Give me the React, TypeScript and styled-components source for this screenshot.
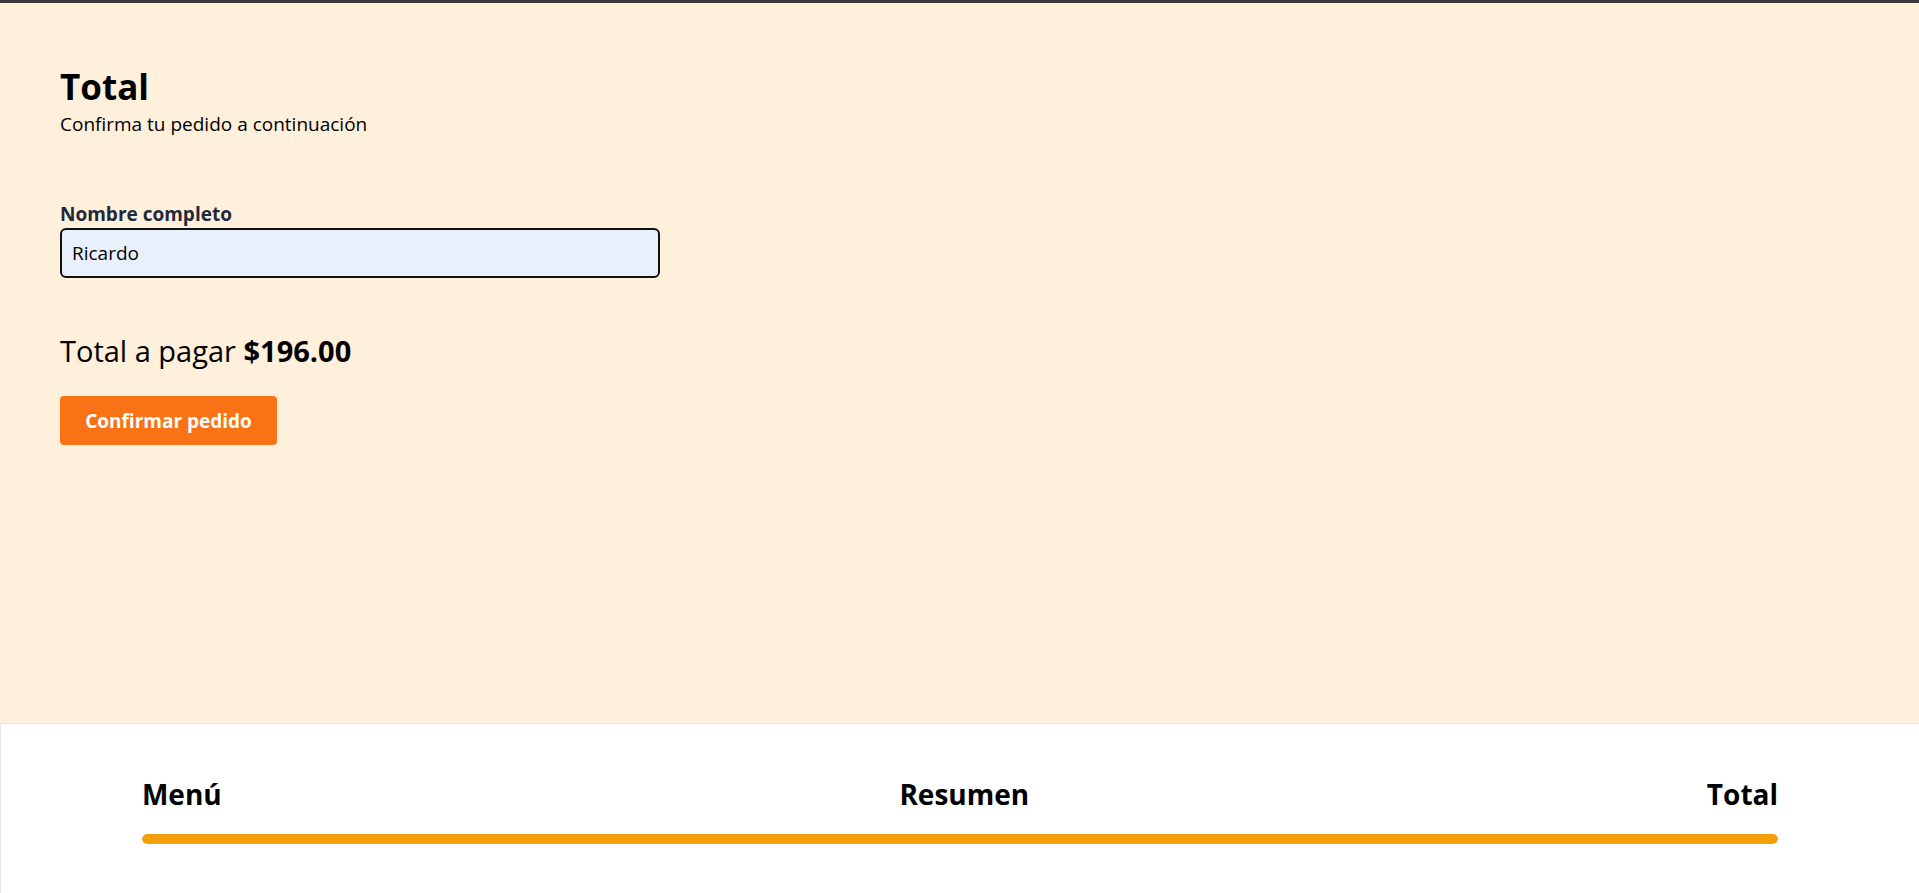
import React from "react";
import styled, { createGlobalStyle } from "styled-components";

const GlobalStyle = createGlobalStyle`
  * { box-sizing: border-box; }
  html, body {
    margin: 0;
    padding: 0;
    background: #fef0da;
    font-family: "Open Sans", "Noto Sans", Arial, sans-serif;
    color: #000;
  }
`;

const Page = styled.div`
  display: flex;
  flex-direction: column;
  min-height: 100vh;
`;

const TopBar = styled.div`
  height: 3px;
  background: #3b3b3b;
`;

const Main = styled.main`
  height: 720px;
  padding: 60px 60px 0;
  background: #fef0da;
`;

const Heading = styled.h1`
  margin: 0;
  font-size: 35px;
  line-height: 48px;
  font-weight: 700;
`;

const Subtitle = styled.p`
  margin: 1px 0 0;
  font-size: 19px;
  line-height: 24px;
`;

const Form = styled.form`
  display: flex;
  flex-direction: column;
  align-items: flex-start;
  margin-top: 66px;
`;

const Field = styled.div`
  display: flex;
  flex-direction: column;
  gap: 2px;
  width: 600px;
`;

const Label = styled.label`
  font-size: 19px;
  line-height: 24px;
  font-weight: 700;
  color: #1e293b;
`;

const Input = styled.input`
  width: 600px;
  height: 50px;
  padding: 0 10px;
  border: 2px solid #111;
  border-radius: 6px;
  background: #e8f0fe;
  font-family: inherit;
  font-size: 19px;
  color: #000;
  outline: none;
`;

const TotalLine = styled.p`
  margin: 55px 0 0;
  font-size: 29px;
  line-height: 36px;
  font-weight: 400;
`;

const Amount = styled.strong`
  font-weight: 700;
`;

const Button = styled.button`
  margin-top: 27px;
  width: 217px;
  height: 49px;
  display: flex;
  align-items: center;
  justify-content: center;
  border: none;
  border-radius: 4px;
  background: #f97316;
  color: #fff;
  font-family: inherit;
  font-size: 19px;
  font-weight: 700;
  cursor: pointer;
`;

const Footer = styled.footer`
  flex: 1;
  background: #fff;
  border-top: 1px solid #e5e7eb;
  border-left: 1px solid #e5e7eb;
  padding-top: 52px;
`;

const Steps = styled.div`
  width: 85.3%;
  margin: 0 auto;
`;

const StepLabels = styled.div`
  display: flex;
  justify-content: space-between;
`;

const StepLabel = styled.span`
  font-size: 28px;
  line-height: 36px;
  font-weight: 700;
`;

const Progress = styled.div`
  margin-top: 22px;
  height: 10px;
  border-radius: 999px;
  background: #f3f4f6;
  overflow: hidden;
`;

const ProgressFill = styled.div`
  height: 100%;
  border-radius: 999px;
  background: #f59e0b;
`;

export default function App() {
  const steps = ["Menú", "Resumen", "Total"];
  const progress = 100;
  return (
    <Page>
      <GlobalStyle />
      <TopBar />
      <Main>
        <Heading>Total</Heading>
        <Subtitle>Confirma tu pedido a continuación</Subtitle>
        <Form onSubmit={(e) => e.preventDefault()}>
          <Field>
            <Label htmlFor="nombre">Nombre completo</Label>
            <Input id="nombre" defaultValue="Ricardo" />
          </Field>
          <TotalLine>
            Total a pagar <Amount>$196.00</Amount>
          </TotalLine>
          <Button type="submit">Confirmar pedido</Button>
        </Form>
      </Main>
      <Footer>
        <Steps>
          <StepLabels>
            {steps.map((s) => (
              <StepLabel key={s}>{s}</StepLabel>
            ))}
          </StepLabels>
          <Progress>
            <ProgressFill style={{ width: `${progress}%` }} />
          </Progress>
        </Steps>
      </Footer>
    </Page>
  );
}
